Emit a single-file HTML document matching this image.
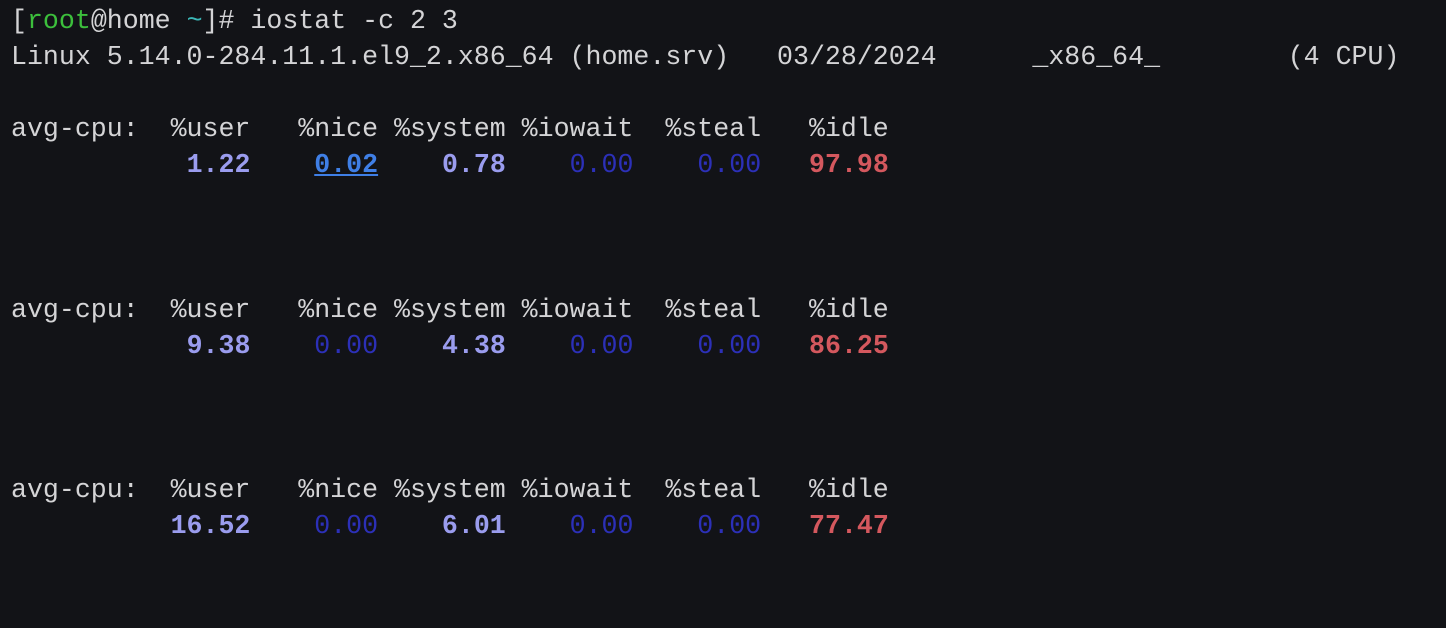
<!DOCTYPE html>
<html><head><meta charset="utf-8"><style>
html,body{margin:0;padding:0;background:#121317;width:1446px;height:628px;overflow:hidden}
pre{margin:0;position:absolute;left:11px;top:3px;font-family:"Liberation Mono","DejaVu Sans Mono",monospace;font-size:26.6px;line-height:36.1px;color:#d4d4d6;letter-spacing:0}
.g{color:#3cbf3c}.c{color:#3bb7b7}
.v{color:#9a9cee;font-weight:bold}
.d{color:#2c30b8}
.r{color:#d4585e;font-weight:bold}
.u{color:#3f7fe6;font-weight:bold;text-decoration:underline}
</style></head><body><pre>[<span class="g">root</span>@home <span class="c">~</span>]# iostat -c 2 3
Linux 5.14.0-284.11.1.el9_2.x86_64 (home.srv)   03/28/2024      _x86_64_        (4 CPU)

avg-cpu:  %user   %nice %system %iowait  %steal   %idle
           <span class="v">1.22</span>    <span class="u">0.02</span>    <span class="v">0.78</span>    <span class="d">0.00</span>    <span class="d">0.00</span>   <span class="r">97.98</span>



avg-cpu:  %user   %nice %system %iowait  %steal   %idle
           <span class="v">9.38</span>    <span class="d">0.00</span>    <span class="v">4.38</span>    <span class="d">0.00</span>    <span class="d">0.00</span>   <span class="r">86.25</span>



avg-cpu:  %user   %nice %system %iowait  %steal   %idle
          <span class="v">16.52</span>    <span class="d">0.00</span>    <span class="v">6.01</span>    <span class="d">0.00</span>    <span class="d">0.00</span>   <span class="r">77.47</span>
</pre></body></html>
